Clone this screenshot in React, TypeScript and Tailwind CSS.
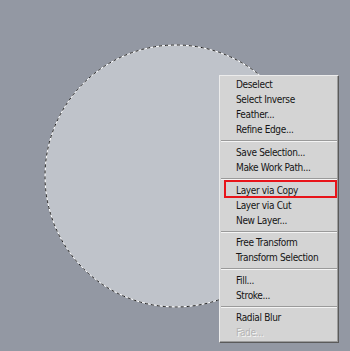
import React from "react";

type Item = { label: string; disabled?: boolean; picked?: boolean };

const groups: Item[][] = [
  [
    { label: "Deselect" },
    { label: "Select Inverse" },
    { label: "Feather..." },
    { label: "Refine Edge..." },
  ],
  [{ label: "Save Selection..." }, { label: "Make Work Path..." }],
  [
    { label: "Layer via Copy", picked: true },
    { label: "Layer via Cut" },
    { label: "New Layer..." },
  ],
  [{ label: "Free Transform" }, { label: "Transform Selection" }],
  [{ label: "Fill..." }, { label: "Stroke..." }],
  [{ label: "Radial Blur" }, { label: "Fade...", disabled: true }],
];

const sepClass = ["h-[8px]", "h-[8px]", "h-[7px]", "h-[8px]", "h-[7px]"];

const Selection = () => (
  <svg
    className="absolute left-[44px] top-[44px]"
    width="264"
    height="264"
    viewBox="0 0 264 264"
  >
    <circle cx="132" cy="132" r="131" fill="#bfc3ca" stroke="#ffffff" strokeWidth="1" />
    <circle
      cx="132"
      cy="132"
      r="131"
      fill="none"
      stroke="#1c1c1c"
      strokeWidth="1"
      strokeDasharray="3 3"
    />
  </svg>
);

const MenuRow: React.FC<{ item: Item }> = ({ item }) => (
  <div
    className={`relative h-[15px] pl-[16px] leading-[15px] whitespace-nowrap ${
      item.disabled ? "text-[#b4b4b4] [text-shadow:1px_1px_0_#f4f4f4]" : "text-[#141414]"
    }`}
  >
    {item.label}
    {item.picked && (
      <div className="absolute left-[4px] top-[-3px] h-[18px] w-[113px] border-2 border-[#e8141a]" />
    )}
  </div>
);

export default function App() {
  return (
    <div className="relative h-[351px] w-[350px] overflow-hidden bg-[#9398a3]">
      <Selection />

      <div
        className="absolute left-[219px] top-[75px] w-[120px] border border-t-[#ececec] border-l-[#ececec] border-r-[#5a5a5a] border-b-[#5a5a5a] bg-[#d4d4d4] pt-px pb-[2px] shadow-[inset_-1px_-1px_0_#9c9c9c] text-[10px] tracking-[-0.35px]"
        style={{ fontFamily: '"DejaVu Sans Condensed", "Liberation Sans", Arial, sans-serif' }}
      >
        {groups.map((group, gi) => (
          <div key={gi}>
            {group.map((item) => (
              <MenuRow key={item.label} item={item} />
            ))}
            {gi < groups.length - 1 && (
              <div className={`flex flex-col justify-center px-[1px] ${sepClass[gi]}`}>
                <div className="h-px bg-[#9a9a9a]" />
                <div className="h-px bg-[#f4f4f4]" />
              </div>
            )}
          </div>
        ))}
      </div>
    </div>
  );
}
